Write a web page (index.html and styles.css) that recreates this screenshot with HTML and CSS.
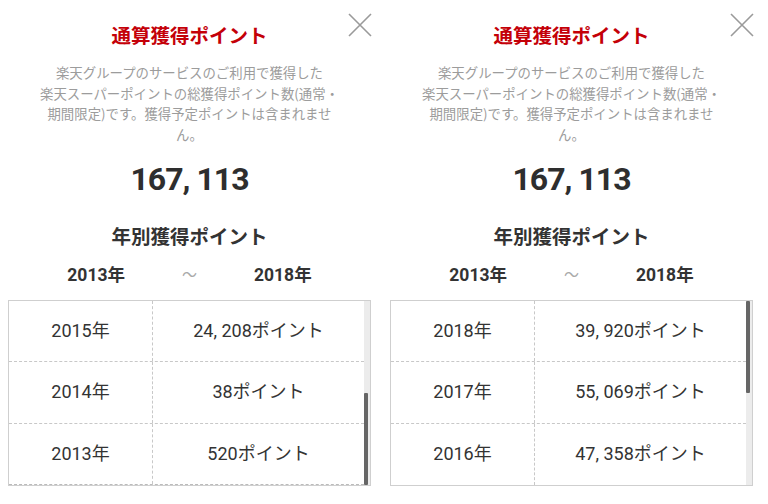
FILE: index.html
```html
<!DOCTYPE html>
<html lang="ja">
<head>
<meta charset="utf-8">
<title>通算獲得ポイント</title>
<link rel="stylesheet" href="styles.css">
</head>
<body>
<div class="wrap">
  <section class="panel">
    <svg class="close" viewBox="0 0 24 24" width="24" height="24"><path d="M1 1L23 23M23 1L1 23" stroke="#9a9a9a" stroke-width="1.6" fill="none"/></svg>
    <h1 class="title">通算獲得ポイント</h1>
    <p class="desc">楽天グループのサービスのご利用で獲得した<br>楽天スーパーポイントの総獲得ポイント数(通常・<br>期間限定)です。獲得予定ポイントは含まれませ<br>ん。</p>
    <div class="total">167, 113</div>
    <h2 class="sub">年別獲得ポイント</h2>
    <div class="range"><span class="yr">2013年</span><span class="tilde">〜</span><span class="yr">2018年</span></div>
    <div class="table">
      <div class="rows">
        <div class="row"><div class="c1">2015年</div><div class="c2">24, 208ポイント</div></div>
        <div class="row"><div class="c1">2014年</div><div class="c2">38ポイント</div></div>
        <div class="row last-dashed"><div class="c1">2013年</div><div class="c2">520ポイント</div></div>
      </div>
      <div class="track"><div class="thumb thumb-bottom"></div></div>
    </div>
  </section>
  <section class="panel">
    <svg class="close" viewBox="0 0 24 24" width="24" height="24"><path d="M1 1L23 23M23 1L1 23" stroke="#9a9a9a" stroke-width="1.6" fill="none"/></svg>
    <h1 class="title">通算獲得ポイント</h1>
    <p class="desc">楽天グループのサービスのご利用で獲得した<br>楽天スーパーポイントの総獲得ポイント数(通常・<br>期間限定)です。獲得予定ポイントは含まれませ<br>ん。</p>
    <div class="total">167, 113</div>
    <h2 class="sub">年別獲得ポイント</h2>
    <div class="range"><span class="yr">2013年</span><span class="tilde">〜</span><span class="yr">2018年</span></div>
    <div class="table">
      <div class="rows">
        <div class="row"><div class="c1">2018年</div><div class="c2">39, 920ポイント</div></div>
        <div class="row"><div class="c1">2017年</div><div class="c2">55, 069ポイント</div></div>
        <div class="row"><div class="c1">2016年</div><div class="c2">47, 358ポイント</div></div>
      </div>
      <div class="track"><div class="thumb"></div></div>
    </div>
  </section>
</div>
</body>
</html>
```
FILE: styles.css
```css
* { box-sizing: border-box; }
html, body { margin: 0; padding: 0; background: #fff; }
body {
  width: 768px;
  height: 504px;
  overflow: hidden;
  font-family: Roboto, "Noto Sans CJK JP", sans-serif;
  color: #333;
}
.wrap {
  display: flex;
  gap: 19px;
  padding-left: 8px;
}
.panel {
  position: relative;
  width: 363px;
  display: flex;
  flex-direction: column;
  align-items: center;
}
.close {
  position: absolute;
  top: 13px;
  right: -1px;
}
.title {
  margin: 21px 0 0;
  font-family: "Noto Sans CJK JP", sans-serif;
  font-size: 19.5px;
  line-height: 28px;
  font-weight: 700;
  color: #c40008;
}
.desc {
  margin: 13px 0 0;
  font-family: "Noto Sans CJK JP", sans-serif;
  font-size: 13.4px;
  line-height: 20.5px;
  color: #9c9c9c;
  text-align: center;
}
.total {
  margin-top: 15px;
  font-size: 32px;
  line-height: 40px;
  font-weight: 700;
  color: #2e2e2e;
  letter-spacing: -1px;
}
.sub {
  margin: 23px 0 0;
  font-family: "Noto Sans CJK JP", sans-serif;
  font-size: 19.5px;
  line-height: 28px;
  font-weight: 700;
  color: #333;
}
.range {
  margin-top: 9px;
  display: flex;
  align-items: center;
  gap: 57px;
  height: 28px;
  font-size: 17.5px;
  font-weight: 700;
}
.tilde {
  font-weight: 400;
  color: #aaa;
  font-family: "Noto Sans CJK JP", sans-serif;
  font-size: 15px;
}
.table {
  margin-top: 13px;
  width: 363px;
  height: 186px;
  border: 1px solid #cfcfcf;
  display: flex;
  overflow: hidden;
}
.rows {
  flex: 1;
  display: flex;
  flex-direction: column;
}
.row {
  display: flex;
  height: 62px;
  flex-shrink: 0;
  border-top: 1px dashed #c8c8c8;
}
.row:first-child { border-top: none; height: 60px; }
.row.last-dashed { border-bottom: 1px dashed #bbb; }
.c1, .c2 {
  display: flex;
  align-items: center;
  justify-content: center;
  font-size: 18px;
  color: #333;
  padding-bottom: 5px;
}
.c1 {
  width: 144px;
  border-right: 1px dashed #c8c8c8;
}
.c2 { flex: 1; }
.track {
  width: 6px;
  background: #ececec;
  display: flex;
  flex-direction: column;
}
.thumb {
  width: 4px;
  height: 92px;
  background: #666;
  border-radius: 1px;
}
.thumb-bottom { margin-top: auto; }
```
